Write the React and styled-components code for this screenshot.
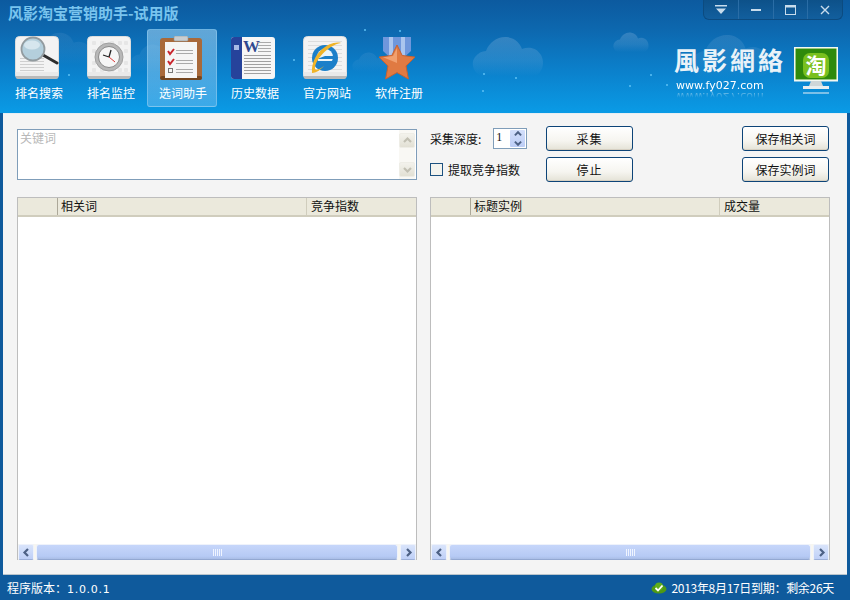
import React from 'react';
import styled, { createGlobalStyle } from 'styled-components';

const CJK = '"Noto Sans CJK SC", "Liberation Sans", sans-serif';

const GlobalStyle = createGlobalStyle`
  html, body { margin: 0; padding: 0; overflow: hidden; }
  body { font-family: ${CJK}; font-size: 12px; color: #111; }
  * { box-sizing: border-box; }
`;

const Window = styled.div`
  width: 850px;
  height: 600px;
  display: flex;
  flex-direction: column;
  background: #0f5a9c;
`;

const Header = styled.header`
  position: relative;
  height: 113px;
  flex: none;
  overflow: hidden;
  padding-left: 2px;
  background: linear-gradient(180deg, #0c5a9f 0%, #0d67ae 25%, #0b80cb 62%, #0a9be6 100%);
`;

const Title = styled.h1`
  margin: 0;
  height: 29px;
  padding: 3px 0 0 6px;
  font-size: 15px;
  line-height: 20px;
  font-weight: 700;
  color: #79c4ee;
`;

const Decor = styled.svg`
  position: absolute;
  left: 0;
  top: 0;
  pointer-events: none;
`;

const Nav = styled.nav`
  position: relative;
  display: flex;
`;

const NavItem = styled.div`
  width: 70px;
  height: 78px;
  margin: 0 1px;
  display: flex;
  flex-direction: column;
  align-items: center;
  border-radius: 3px;
  border: ${(p) => (p.$active ? '1px solid rgba(150,205,240,.55)' : '0')};
  padding-top: ${(p) => (p.$active ? '6px' : '7px')};
  background: ${(p) => (p.$active ? 'linear-gradient(180deg, rgba(150,205,240,.62), rgba(110,190,240,.5))' : 'none')};
`;

const IconBox = styled.div`
  width: 44px;
  height: 44px;
  flex: none;
  margin-right: 2px;
`;

const NavLabel = styled.span`
  margin: 5px 0 0 2px;
  font-size: 12px;
  line-height: 16px;
  color: #fff;
  white-space: nowrap;
`;

const WinControls = styled.div`
  position: absolute;
  right: 7px;
  top: 0;
  display: flex;
  width: 140px;
  height: 20px;
  border-radius: 0 0 6px 6px;
  background: linear-gradient(180deg, #0d5189, #125f9e);
  border: 1px solid #0c4b80;
  border-top: 0;
`;

const WinButton = styled.div`
  flex: 1;
  display: flex;
  align-items: center;
  justify-content: center;
  & + & { border-left: 1px solid #2a6da6; }
`;

const Brand = styled.div`
  position: absolute;
  left: 674px;
  top: 44px;
  width: 118px;
  color: #fff;
`;

const BrandName = styled.div`
  font-family: "Noto Sans CJK TC", serif;
  font-size: 25px;
  line-height: 30px;
  font-weight: 700;
  letter-spacing: 3px;
  color: #e9f2f8;
  white-space: nowrap;
`;

const BrandUrl = styled.div`
  margin: 5px 0 0 2px;
  font-family: "DejaVu Sans", sans-serif;
  font-size: 11px;
  line-height: 13px;
  -webkit-box-reflect: below -2px linear-gradient(to bottom, transparent 40%, rgba(255, 255, 255, .6));
`;

const Monitor = styled.svg`
  position: absolute;
  left: 794px;
  top: 47px;
`;

const Panel = styled.main`
  flex: 1;
  margin: 0 3px;
  padding: 15px 14px 0;
  background: #f4f4f4;
  border-bottom: 1px solid #b9c4cc;
  border-top: 1px solid #e6eef3;
  display: grid;
  grid-template-columns: 400px 400px;
  grid-template-rows: 51px 363px;
  column-gap: 13px;
  row-gap: 17px;
`;

const KeywordBox = styled.div`
  display: flex;
  justify-content: space-between;
  background: #fff;
  border: 1px solid #7f9db9;
  padding: 0 1px 0 2px;
  color: #b8b8b8;
  line-height: 15px;
`;

const VScroll = styled.div`
  width: 16px;
  padding: 3px 0 2px;
  display: flex;
  flex-direction: column;
  justify-content: space-between;
  background: #f9f8f4;
`;

const VArrow = styled.div`
  height: 15px;
  display: flex;
  align-items: center;
  justify-content: center;
  background: linear-gradient(180deg, #f3f2ec, #e2e0d4);
  border: 1px solid #eeede6;
  border-radius: 2px;
`;

const Controls = styled.div`
  display: grid;
  margin-top: -3px;
  align-self: start;
  grid-template-columns: 116px 87px 1fr;
  grid-template-rows: 25px 25px;
  row-gap: 6px;
`;

const Depth = styled.div`
  display: flex;
  align-items: center;
  font-size: 12px;
  white-space: nowrap;
`;

const Spinner = styled.div`
  margin-left: 12px;
  width: 34px;
  height: 21px;
  display: flex;
  justify-content: space-between;
  padding: 1px 1px 1px 2px;
  background: #fff;
  border: 1px solid #7f9db9;
  font-family: "Liberation Serif", serif;
  line-height: 14px;
`;

const SpinButtons = styled.div`
  width: 15px;
  display: flex;
  flex-direction: column;
  align-items: center;
  justify-content: space-around;
  background: linear-gradient(180deg, #d3dffb, #bccdf6);
  border-radius: 1px;
`;

const CheckRow = styled.label`
  display: flex;
  align-items: center;
  white-space: nowrap;
`;

const CheckBox = styled.span`
  width: 13px;
  height: 13px;
  margin-right: 5px;
  background: #f3f3ee;
  border: 1px solid #1c5180;
`;

const Button = styled.div`
  height: 25px;
  display: flex;
  align-items: center;
  justify-content: center;
  letter-spacing: ${(p) => (p.$wide ? '1px' : '0')};
  background: linear-gradient(180deg, #fff 0%, #f6f5f0 60%, #e4e2d6 100%);
  border: 1px solid #0d4478;
  border-radius: 3px;
  box-shadow: inset 0 -1px 0 #d6d0c2;
`;

const SaveButton = styled(Button)`
  width: 87px;
  justify-self: end;
  margin-right: 1px;
`;

const Table = styled.section`
  display: flex;
  flex-direction: column;
  height: 363px;
  background: #fff;
  border: 1px solid #bdbdbd;
  border-bottom: 0;
`;

const TableHead = styled.div`
  display: flex;
  height: 19px;
  flex: none;
  background: #ebe9dc;
  border-bottom: 2px solid #d0cdbd;
  line-height: 16px;
`;

const Corner = styled.div`
  width: 40px;
  flex: none;
  border-right: 1px solid #aca899;
`;

const HeadCell = styled.div`
  padding-left: ${(p) => (p.$last ? '4px' : '3px')};
  flex: ${(p) => (p.$last ? '1' : 'none')};
  width: ${(p) => (p.$last ? 'auto' : '248px')};
  border-left: ${(p) => (p.$last ? '1px solid #d0cdbd' : '0')};
  font-size: 12px;
`;

const TableBody = styled.div`
  flex: 1;
`;

const HScroll = styled.div`
  height: 16px;
  display: flex;
  justify-content: space-between;
  gap: 2px;
  background: #f7f6f1;
  flex: none;
`;

const HArrow = styled.div`
  width: 16px;
  display: flex;
  align-items: center;
  justify-content: center;
  background: linear-gradient(180deg, #d9e4fb, #bfd0f7);
  border: 1px solid #eef2fb;
  border-bottom-color: #9db0d8;
  border-radius: 2px;
`;

const HThumb = styled.div`
  flex: 1;
  display: flex;
  align-items: center;
  justify-content: center;
  gap: 1px;
  background: linear-gradient(180deg, #c6d6fa, #b6caf5 80%, #a9bde6);
  border: 1px solid #eef2fb;
  border-bottom-color: #93a8d2;
  border-radius: 3px;
`;

const Grip = styled.i`
  width: 1px;
  height: 7px;
  background: #eff4ff;
`;

const StatusBar = styled.footer`
  height: 25px;
  flex: none;
  display: flex;
  align-items: center;
  justify-content: space-between;
  padding: 0 16px 0 7px;
  color: #fff;
  font-size: 12px;
`;

const VersionNo = styled.span`
  font-family: "DejaVu Sans", sans-serif;
  font-size: 11px;
  letter-spacing: .7px;
`;

const Expire = styled.span`
  display: flex;
  align-items: center;
  gap: 4px;
  letter-spacing: -.3px;
`;

const CLOUD_PATH = 'M9 40C2 37-2 28 3 21c3-4 7-6 11-6C17 6 26 0 35 1c8 1 13 6 15 12 7-3 15-1 19 6 4 8 2 16-5 21z';

const Cloud = ({ x, y, w, o = 1 }) => (
  <path
    transform={`translate(${x} ${y}) scale(${w / 72})`}
    fill="url(#cloudFade)"
    opacity={o}
    d={CLOUD_PATH}
  />
);

const Sheet = ({ children }) => (
  <svg width="44" height="44" viewBox="0 0 44 44">
    <rect x="0.5" y="0.5" width="43" height="42" rx="4" fill="#f3f3f3" stroke="#ddd" />
    <rect x="0.5" y="38" width="43" height="5" rx="3" fill="#b9b9b9" />
    <rect x="0.5" y="36" width="43" height="4" fill="#e9e9e9" />
    {children}
  </svg>
);

const SearchIcon = () => (
  <Sheet>
    {[22, 25, 28, 31, 34].map((y) => <rect key={y} x="5" y={y} width="24" height="1" fill="#cfcfcf" />)}
    <path d="M28 19l14 8" stroke="#2e2e2e" strokeWidth="3" strokeLinecap="round" />
    <circle cx="18" cy="13" r="11.500" fill="#b4cfdc" stroke="#929b9f" strokeWidth="1.800" />
    <ellipse cx="17" cy="9" rx="8" ry="4.500" fill="#d6e6ee" />
  </Sheet>
);

const ClockIcon = () => (
  <Sheet>
    <g fill="#e6e6e6">
      {[5, 13, 23, 31, 37].map((x) => [5, 13, 25, 32].map((y) => <rect key={`${x}${y}`} x={x} y={y} width="4" height="4" rx="1" />))}
    </g>
    <circle cx="22" cy="21" r="14" fill="#b8b8b8" stroke="#a0a0a0" />
    <circle cx="22" cy="21" r="10.500" fill="#f6f6f6" stroke="#8a8a8a" />
    <path d="M22 21l-6-2" stroke="#222" strokeWidth="1.300" />
    <path d="M22 21l2-7" stroke="#222" strokeWidth="1.300" />
    <path d="M22 21l6 5" stroke="#d33" strokeWidth="1" />
  </Sheet>
);

const ClipboardIcon = () => (
  <svg width="44" height="44" viewBox="0 0 44 44">
    <rect x="1" y="2" width="42" height="42" rx="3" fill="#a9693a" />
    <rect x="1" y="40" width="42" height="4" rx="2" fill="#74451f" />
    <rect x="6" y="6" width="32" height="36" fill="#f5f5f5" />
    <rect x="15" y="0" width="14" height="5" rx="1" fill="#c9cdd0" stroke="#8f979c" strokeWidth=".6" />
    <path d="M9 15l2 3 4-5M9 25l2 3 4-5" fill="none" stroke="#c9252d" strokeWidth="2" />
    <rect x="9.500" y="32.500" width="4" height="4" fill="none" stroke="#777" />
    {[14, 17, 24, 27, 33, 36].map((y) => <rect key={y} x="17" y={y} width="17" height="1" fill="#aaa" />)}
  </svg>
);

const WordIcon = () => (
  <svg width="44" height="44" viewBox="0 0 44 44">
    <rect x="0" y="1" width="44" height="42" rx="3" fill="#f6f6f6" />
    <path d="M0 4a3 3 0 0 1 3-3h8v42H3a3 3 0 0 1-3-3z" fill="#26439b" />
    <rect x="3" y="9" width="5" height="5" fill="#a8b9e5" />
    <text x="12" y="16" fontFamily="Liberation Serif, serif" fontSize="17" fontWeight="700" fill="#30488f">W</text>
    {[6, 9, 12, 15].map((y) => <rect key={y} x="27" y={y} width="13" height="1" fill="#aaa" />)}
    {[19, 22, 25, 28, 31, 34, 37].map((y) => <rect key={y} x="13" y={y} width="27" height="1" fill="#a0a0a0" />)}
  </svg>
);

const IeIcon = () => (
  <Sheet>
    {[5, 9, 13, 17, 21, 25, 29, 33].map((y) => <rect key={y} x="5" y={y} width="34" height="1" fill="#ddd" />)}
    <circle cx="22" cy="22" r="13" fill="#1b7fc9" />
    <circle cx="22" cy="21" r="8" fill="#eaf5fb" />
    <path d="M14 23h17v-3h-9" fill="#1b7fc9" />
    <path d="M13 25h18l-2 5-9 2z" fill="#1b7fc9" />
    <path d="M38 7C28 4 8 16 9 37c5 0 9-4 12-7-4 3-8 5-9 3-1-8 13-24 26-26z" fill="#f0b429" />
  </Sheet>
);

const MedalIcon = () => (
  <svg width="44" height="44" viewBox="0 0 44 44">
    <path d="M8 1h28v14L22 28 8 15z" fill="#6f97dc" />
    <path d="M14 1h4v20h-4zM26 1h4v20h-4z" fill="#aac5ee" />
    <path d="M22 9l5.200 10.500 12.800 1.600-9 8.800 2.400 13.100-11.400-6.400-11.400 6.400L13 29.900l-9-8.800 12.800-1.600z" fill="#e07a42" stroke="#c9612f" />
    <path d="M22 12l-4 8-10 1.300L22 27z" fill="#f1a06f" />
  </svg>
);

const NAV_ITEMS = [
  { label: '排名搜索', Icon: SearchIcon },
  { label: '排名监控', Icon: ClockIcon },
  { label: '选词助手', Icon: ClipboardIcon, active: true },
  { label: '历史数据', Icon: WordIcon },
  { label: '官方网站', Icon: IeIcon },
  { label: '软件注册', Icon: MedalIcon },
];

const Chevron = ({ dir, color = '#4d6185', size = 9 }) => {
  const d = {
    left: 'M6 1L2.500 4.500 6 8',
    right: 'M3 1l3.500 3.500L3 8',
    up: 'M1 6l3.500-3.500L8 6',
    down: 'M1 3l3.500 3.500L8 3',
  }[dir];
  return (
    <svg width={size} height={size} viewBox="0 0 9 9">
      <path d={d} fill="none" stroke={color} strokeWidth="2.200" />
    </svg>
  );
};

const DataTable = ({ first, second }) => (
  <Table>
    <TableHead>
      <Corner />
      <HeadCell>{first}</HeadCell>
      <HeadCell $last>{second}</HeadCell>
    </TableHead>
    <TableBody />
    <HScroll>
      <HArrow><Chevron dir="left" /></HArrow>
      <HThumb>{[0, 1, 2, 3, 4].map((i) => <Grip key={i} />)}</HThumb>
      <HArrow><Chevron dir="right" /></HArrow>
    </HScroll>
  </Table>
);

const App = () => (
  <Window>
    <GlobalStyle />
    <Header>
      <Decor width="850" height="113">
        <defs>
          <linearGradient id="cloudFade" x1="0" y1="0" x2="0" y2="1">
            <stop offset="0" stopColor="#b4cdea" stopOpacity=".24" />
            <stop offset=".6" stopColor="#a8c8e8" stopOpacity=".15" />
            <stop offset="1" stopColor="#a8c8e8" stopOpacity="0" />
          </linearGradient>
        </defs>
        <Cloud x={472} y={36} w={72} />
        <Cloud x={613} y={32} w={36} />
        <Cloud x={690} y={34} w={80} o={0.6} />
        <Cloud x={32} y={32} w={60} o={0.4} />
        <Cloud x={352} y={52} w={36} o={0.4} />
        <Cloud x={130} y={44} w={50} o={0.4} />
        {[[69, 75], [100, 82], [294, 60], [400, 31], [365, 30], [484, 74], [516, 78], [483, 91], [651, 75], [630, 86], [667, 85]].map(([cx, cy]) => (
          <circle key={`${cx}-${cy}`} cx={cx} cy={cy} r="1" fill="#5cc0f5" />
        ))}
      </Decor>
      <Title>风影淘宝营销助手-试用版</Title>
      <Nav>
        {NAV_ITEMS.map(({ label, Icon, active }) => (
          <NavItem key={label} $active={active}>
            <IconBox><Icon /></IconBox>
            <NavLabel>{label}</NavLabel>
          </NavItem>
        ))}
      </Nav>
      <WinControls>
        <WinButton>
          <svg width="12" height="9" viewBox="0 0 12 9">
            <path d="M0 0h12v1.500H0zM1 3.500h10L6 9z" fill="#c8dcec" />
          </svg>
        </WinButton>
        <WinButton>
          <svg width="10" height="4" viewBox="0 0 10 4"><rect y="1" width="10" height="2" fill="#c8dcec" /></svg>
        </WinButton>
        <WinButton>
          <svg width="11" height="10" viewBox="0 0 11 10">
            <rect x=".5" y=".5" width="10" height="9" fill="none" stroke="#c8dcec" />
            <rect y="0" width="11" height="2.500" fill="#c8dcec" />
          </svg>
        </WinButton>
        <WinButton>
          <svg width="10" height="10" viewBox="0 0 10 10">
            <path d="M1 1l8 8M9 1l-8 8" stroke="#c8dcec" strokeWidth="1.400" />
          </svg>
        </WinButton>
      </WinControls>
      <Brand>
        <BrandName>風影網絡</BrandName>
        <BrandUrl>www.fy027.com</BrandUrl>
      </Brand>
      <Monitor width="44" height="50" viewBox="0 0 44 50">
        <rect x="0.500" y="0.500" width="43" height="33" fill="#3f9a12" stroke="#f4f8f2" strokeWidth="2" />
        <rect x="2" y="2" width="40" height="30" fill="#2f8a0c" />
        <rect x="9" y="6" width="26" height="25" rx="7" fill="#79c01f" />
        <text x="22" y="26" textAnchor="middle" fontFamily="Noto Sans CJK SC, sans-serif" fontSize="21" fontWeight="700" fill="#fff">淘</text>
        <path d="M17 34h10l2 5H15z" fill="#cfd6d8" />
        <rect x="9" y="39" width="26" height="3" fill="#e8eef0" />
        <rect x="9" y="45" width="26" height="2" fill="#7cc0e8" />
      </Monitor>
    </Header>
    <Panel>
      <KeywordBox>
        关键词
        <VScroll>
          <VArrow><Chevron dir="up" color="#c2c0b3" /></VArrow>
          <VArrow><Chevron dir="down" color="#c2c0b3" /></VArrow>
        </VScroll>
      </KeywordBox>
      <Controls>
        <Depth>
          采集深度:
          <Spinner>
            1
            <SpinButtons>
              <Chevron dir="up" size={8} />
              <Chevron dir="down" size={8} />
            </SpinButtons>
          </Spinner>
        </Depth>
        <Button $wide>采集</Button>
        <SaveButton>保存相关词</SaveButton>
        <CheckRow><CheckBox />提取竞争指数</CheckRow>
        <Button $wide>停止</Button>
        <SaveButton>保存实例词</SaveButton>
      </Controls>
      <DataTable first="相关词" second="竞争指数" />
      <DataTable first="标题实例" second="成交量" />
    </Panel>
    <StatusBar>
      <span>程序版本：<VersionNo>1.0.0.1</VersionNo></span>
      <Expire>
        <svg width="16" height="12" viewBox="0 0 16 12">
          <ellipse cx="8" cy="7" rx="7.500" ry="4.500" fill="#4f9a14" />
          <circle cx="8" cy="4.500" r="4" fill="#5fae1a" />
          <path d="M4.500 6l2.500 2.500L11.500 3.500" fill="none" stroke="#fff" strokeWidth="1.800" />
        </svg>
        2013年8月17日到期：剩余26天
      </Expire>
    </StatusBar>
  </Window>
);

export default App;
